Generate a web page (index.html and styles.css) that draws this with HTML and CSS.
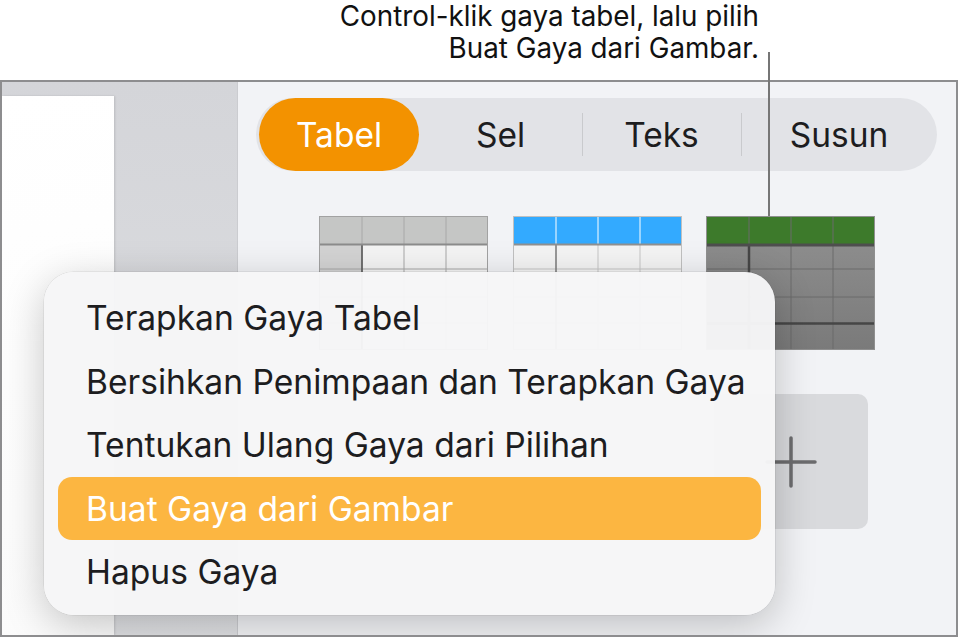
FILE: index.html
```html
<!DOCTYPE html>
<html lang="id">
<head>
  <meta charset="UTF-8">
  <title>Gaya tabel — menu konteks</title>
  <link rel="stylesheet" href="styles.css">
</head>
<body>
<div class="callout">
  <p>Control-klik gaya tabel, lalu pilih<br>Buat Gaya dari Gambar.</p>
</div>
<div class="leader"></div>

<div class="window">
  <div class="sidebar">
    <div class="page"></div>
  </div>

  <div class="inspector">
    <div class="tabs">
      <div class="tab active"><span>Tabel</span></div>
      <div class="tab">Sel</div>
      <div class="tab divided">Teks</div>
      <div class="tab divided">Susun</div>
    </div>

    <div class="styles">
      <svg class="thumb" width="169" height="134" viewBox="0 0 169 134">
        <rect x="0" y="0" width="169" height="28" fill="#c5c6c5"/>
        <rect x="0" y="28" width="169" height="106" fill="#f4f4f4"/>
        <rect x="0" y="28" width="43" height="106" fill="#d3d3d3"/>
        <g stroke="#a8a8a8" stroke-width="1">
          <line x1="43" y1="0" x2="43" y2="134"/>
          <line x1="85" y1="0" x2="85" y2="134"/>
          <line x1="127" y1="0" x2="127" y2="134"/>
          <line x1="0" y1="53" x2="169" y2="53"/>
          <line x1="0" y1="81" x2="169" y2="81"/>
          <line x1="0" y1="107" x2="169" y2="107"/>
        </g>
        <line x1="43" y1="28" x2="43" y2="134" stroke="#555" stroke-width="1.5"/>
        <line x1="0" y1="28.5" x2="169" y2="28.5" stroke="#8c8c8c" stroke-width="2"/>
        <rect x="0.5" y="0.5" width="168" height="133" fill="none" stroke="#a2a2a2"/>
      </svg>

      <svg class="thumb" width="169" height="134" viewBox="0 0 169 134">
        <rect x="0" y="0" width="169" height="28" fill="#33aaff"/>
        <rect x="0" y="28" width="169" height="106" fill="#f4f4f4"/>
        <g stroke="#ffffff" stroke-width="1">
          <line x1="43" y1="0" x2="43" y2="28"/>
          <line x1="85" y1="0" x2="85" y2="28"/>
          <line x1="127" y1="0" x2="127" y2="28"/>
        </g>
        <g stroke="#c6c6c6" stroke-width="1">
          <line x1="85" y1="28" x2="85" y2="134"/>
          <line x1="127" y1="28" x2="127" y2="134"/>
          <line x1="0" y1="53" x2="169" y2="53"/>
          <line x1="0" y1="81" x2="169" y2="81"/>
          <line x1="0" y1="107" x2="169" y2="107"/>
        </g>
        <line x1="43" y1="28" x2="43" y2="134" stroke="#7a7a7a" stroke-width="1.5"/>
        <line x1="0" y1="28.5" x2="169" y2="28.5" stroke="#909090" stroke-width="2"/>
        <rect x="0.5" y="0.5" width="168" height="133" fill="none" stroke="#c0c0c0"/>
      </svg>

      <svg class="thumb" width="169" height="134" viewBox="0 0 169 134">
        <defs>
          <linearGradient id="dark" x1="0" y1="0" x2="0" y2="1">
            <stop offset="0" stop-color="#8c8c8c"/>
            <stop offset="1" stop-color="#7a7a7a"/>
          </linearGradient>
        </defs>
        <rect x="0" y="0" width="169" height="28" fill="#3d7a2b"/>
        <rect x="0" y="28" width="169" height="106" fill="url(#dark)"/>
        <g stroke="#6a6a6a" stroke-width="1">
          <line x1="43" y1="0" x2="43" y2="134"/>
          <line x1="85" y1="0" x2="85" y2="134"/>
          <line x1="127" y1="0" x2="127" y2="134"/>
          <line x1="0" y1="53" x2="169" y2="53"/>
          <line x1="0" y1="81" x2="169" y2="81"/>
        </g>
        <line x1="0" y1="107.5" x2="169" y2="107.5" stroke="#464646" stroke-width="2.5"/>
        <line x1="43" y1="28" x2="43" y2="134" stroke="#464646" stroke-width="2.5"/>
        <line x1="0" y1="29" x2="169" y2="29" stroke="#4e4e4e" stroke-width="3"/>
        <rect x="0.5" y="0.5" width="168" height="133" fill="none" stroke="#8f8f8f"/>
      </svg>

      <div class="slot"></div>
      <div class="slot"></div>
      <div class="slot">
        <div class="add-tile">
          <svg width="52" height="52" viewBox="0 0 52 52">
            <path d="M26 2v48M2 26h48" stroke="#6c6c6e" stroke-width="3.5" stroke-linecap="round" fill="none"/>
          </svg>
        </div>
      </div>
    </div>
  </div>

  <ul class="menu">
    <li>Terapkan Gaya Tabel</li>
    <li>Bersihkan Penimpaan dan Terapkan Gaya</li>
    <li>Tentukan Ulang Gaya dari Pilihan</li>
    <li class="selected">Buat Gaya dari Gambar</li>
    <li>Hapus Gaya</li>
  </ul>
</div>
</body>
</html>
```

FILE: styles.css
```css
body {
  margin: 0;
  width: 960px;
  height: 638px;
  position: relative;
  background: #ffffff;
  font-family: Inter, "Noto Sans", sans-serif;
  color: #1d1d1f;
  overflow: hidden;
}

.callout {
  height: 80px;
  padding-right: 201px;
  box-sizing: border-box;
  text-align: right;
}

.callout p {
  margin: 0;
  font-size: 27.8px;
  line-height: 32px;
  color: #111;
}

.leader {
  position: absolute;
  left: 768px;
  top: 52px;
  width: 2px;
  height: 164px;
  background: #767676;
  z-index: 3;
}

.window {
  position: relative;
  display: flex;
  width: 958px;
  height: 557px;
  box-sizing: border-box;
  border: 2px solid #8d8d8f;
  overflow: hidden;
}

.sidebar {
  width: 236px;
  flex-shrink: 0;
  padding-top: 14px;
  box-sizing: border-box;
  background: linear-gradient(180deg, #d4d5d9 0%, #dfe0e3 100%);
  border-right: 1px solid #cbccd0;
}

.page {
  width: 112px;
  height: 100%;
  background: linear-gradient(170deg, #ffffff 0%, #fbfbfb 100%);
  box-shadow: 1px 0 2px rgba(0, 0, 0, 0.12);
}

.inspector {
  flex: 1;
  background: #f2f3f6;
  padding: 16px 19px 0 18px;
}

.tabs {
  display: grid;
  grid-template-columns: 163px 163px 159px 1fr;
  height: 73px;
  border-radius: 37px;
  background: #e2e3e7;
  font-size: 33.5px;
}

.tab {
  display: flex;
  align-items: center;
  justify-content: center;
  position: relative;
  color: #1d1d1f;
}

.tab.divided::before {
  content: "";
  position: absolute;
  left: 0;
  top: 15px;
  bottom: 15px;
  width: 1px;
  background: #c9cacd;
}

.tab.active {
  justify-content: flex-start;
  padding-left: 3px;
}

.tab.active span {
  display: flex;
  align-items: center;
  justify-content: center;
  width: 160px;
  height: 73px;
  border-radius: 37px;
  background: #f39200;
  color: #ffffff;
}

.styles {
  display: grid;
  grid-template-columns: 169px 169px 169px;
  grid-template-rows: 134px 135px;
  column-gap: 24.5px;
  row-gap: 44px;
  margin: 45px 0 0 63px;
}

.thumb {
  display: block;
}

.slot {
  display: flex;
  justify-content: center;
}

.add-tile {
  width: 154px;
  height: 135px;
  border-radius: 10px;
  background: #d9dadd;
  display: flex;
  align-items: center;
  justify-content: center;
}

.menu {
  position: absolute;
  left: 42px;
  top: 190px;
  width: 731px;
  margin: 0;
  padding: 14px 14px 11px;
  box-sizing: border-box;
  list-style: none;
  background: rgba(246, 246, 247, 0.97);
  border-radius: 30px;
  box-shadow: 0 10px 40px rgba(0, 0, 0, 0.22), 0 0 0 0.5px rgba(0, 0, 0, 0.1);
  font-size: 33.6px;
  z-index: 2;
}

.menu li {
  height: 63.5px;
  line-height: 63.5px;
  padding-left: 28px;
  border-radius: 14px;
  color: #1d1d1f;
  white-space: nowrap;
}

.menu li.selected {
  background: #fcb641;
  color: #ffffff;
}
```
